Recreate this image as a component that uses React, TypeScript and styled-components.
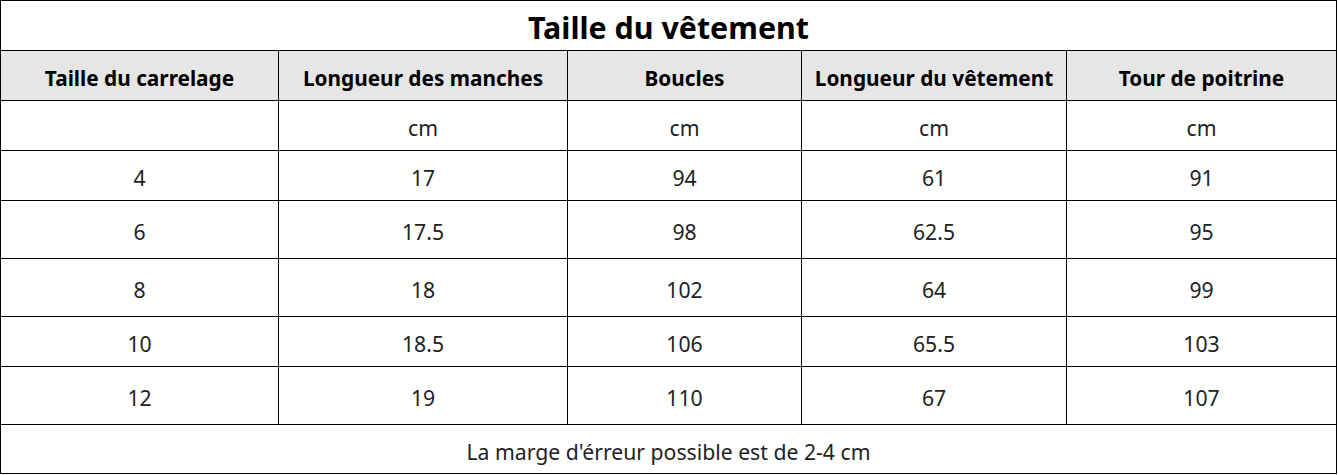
import React from "react";
import styled, { createGlobalStyle } from "styled-components";

const Global = createGlobalStyle`
  html, body { margin: 0; padding: 0; background: #fff; }
  body { font-family: "Noto Sans", "Noto Sans CJK SC", sans-serif; }
`;

const Sheet = styled.div`
  display: grid;
  grid-template-columns: 278px 289px 234px 265px 270px;
  width: 1337px;
  border-left: 1px solid #000;
  border-top: 1px solid #000;
  box-sizing: border-box;
`;

const Cell = styled.div<{ $h: number; $head?: boolean; $span?: boolean }>`
  box-sizing: border-box;
  grid-column: ${(p) => (p.$span ? "1 / -1" : "auto")};
  height: ${(p) => p.$h}px;
  padding-top: 4px;
  display: flex;
  align-items: center;
  justify-content: center;
  border-right: 1px solid #000;
  border-bottom: 1px solid #000;
  background: ${(p) => (p.$head ? "#e6e6e6" : "#fff")};
  color: ${(p) => (p.$head ? "#000" : "#222")};
  font-size: ${(p) => (p.$head ? "20.8px" : "21.2px")};
  font-weight: ${(p) => (p.$head ? 700 : 400)};
  white-space: nowrap;
`;

const Title = styled(Cell)`
  font-size: 30.4px;
  font-weight: 700;
  color: #000;
`;

const headers = [
  "Taille du carrelage",
  "Longueur des manches",
  "Boucles",
  "Longueur du vêtement",
  "Tour de poitrine",
];

const rows: { h: number; v: string[] }[] = [
  { h: 50, v: ["", "cm", "cm", "cm", "cm"] },
  { h: 50, v: ["4", "17", "94", "61", "91"] },
  { h: 58, v: ["6", "17.5", "98", "62.5", "95"] },
  { h: 58, v: ["8", "18", "102", "64", "99"] },
  { h: 50, v: ["10", "18.5", "106", "65.5", "103"] },
  { h: 58, v: ["12", "19", "110", "67", "107"] },
];

export default function App() {
  return (
    <>
      <Global />
      <Sheet>
        <Title $h={50} $span>
          Taille du vêtement
        </Title>
        {headers.map((t) => (
          <Cell key={t} $h={50} $head>
            {t}
          </Cell>
        ))}
        {rows.map((r, i) =>
          r.v.map((t, j) => (
            <Cell key={`${i}-${j}`} $h={r.h}>
              {t}
            </Cell>
          ))
        )}
        <Cell $h={49} $span>
          La marge d'érreur possible est de 2-4 cm
        </Cell>
      </Sheet>
    </>
  );
}
